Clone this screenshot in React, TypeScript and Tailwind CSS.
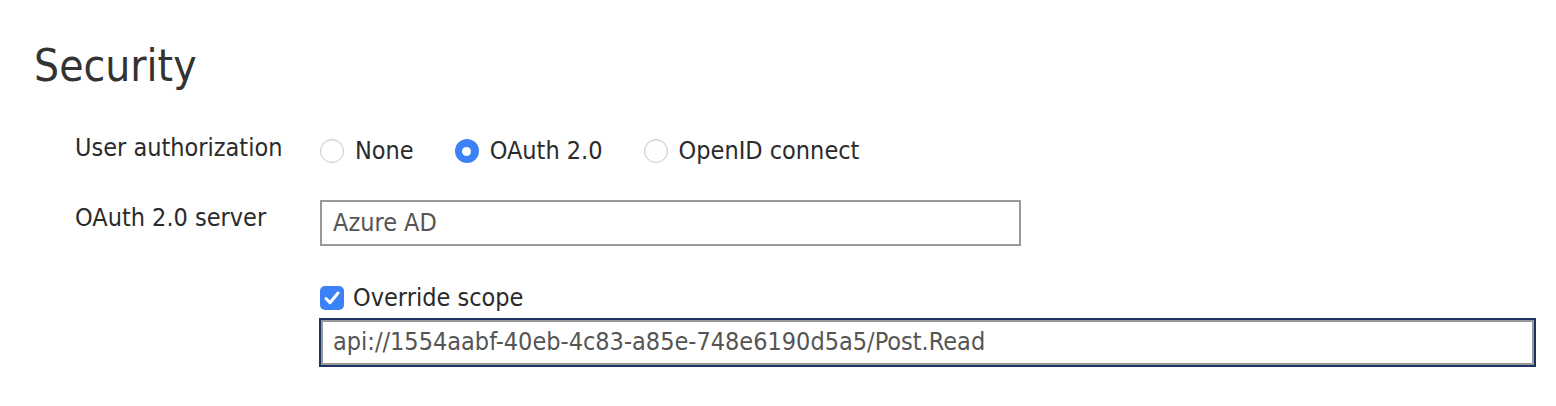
import React, { useState } from "react";

const font = { fontFamily: '"DejaVu Sans Condensed", "DejaVu Sans", Verdana, sans-serif' };

function Radio({ checked, label, onSelect }: { checked: boolean; label: string; onSelect: () => void }) {
  return (
    <label className="flex items-center cursor-pointer" onClick={onSelect}>
      {checked ? (
        <span className="w-[24px] h-[24px] rounded-full bg-[#3b82f6] flex items-center justify-center">
          <span className="w-[9px] h-[9px] rounded-full bg-white" />
        </span>
      ) : (
        <span className="w-[24px] h-[24px] rounded-full border border-[#c8c8c8] bg-white shadow-[inset_0_1px_1px_rgba(0,0,0,0.06)]" />
      )}
      <span className="ml-[11px]">{label}</span>
    </label>
  );
}

export default function App() {
  const [auth, setAuth] = useState("oauth");
  const [override, setOverride] = useState(true);

  return (
    <div className="w-[1556px] h-[406px] bg-white text-[#2b2b2b] text-[25px]" style={font}>
      <h1 className="pl-[34px] pt-[38px] text-[44px] leading-[56px] text-[#333]">Security</h1>

      <div className="pl-[75px] pt-[29px]">
        <div className="flex items-center h-[56px]">
          <div className="w-[245px] -mt-[6px]">User authorization</div>
          <div className="flex items-center gap-[41px]">
            <Radio checked={auth === "none"} label="None" onSelect={() => setAuth("none")} />
            <Radio checked={auth === "oauth"} label="OAuth 2.0" onSelect={() => setAuth("oauth")} />
            <Radio checked={auth === "oidc"} label="OpenID connect" onSelect={() => setAuth("oidc")} />
          </div>
        </div>

        <div className="flex items-start mt-[21px]">
          <div className="w-[245px] -mt-[1px]">OAuth 2.0 server</div>
          <div className="flex flex-col">
            <div className="w-[701px] h-[46px] border-2 border-[#999] flex items-center px-[11px] text-[#555]">
              Azure AD
            </div>
            <label className="flex items-center mt-[33px] cursor-pointer" onClick={() => setOverride(!override)}>
              <span
                className={`w-[24px] h-[24px] rounded-[5px] flex items-center justify-center ${
                  override ? "bg-[#3b82f6]" : "border border-[#c8c8c8] bg-white"
                }`}
              >
                {override && (
                  <svg width="20" height="20" viewBox="0 0 20 20" fill="none">
                    <path d="M4 10.5l4 4.2L16 5" stroke="white" strokeWidth="3" strokeLinecap="round" strokeLinejoin="round" />
                  </svg>
                )}
              </span>
              <span className="ml-[9px]">Override scope</span>
            </label>
            <div className="mt-[1px] -ml-[1px] w-[1217px] h-[49px] border-2 border-[#1b3461] p-0">
              <div className="w-full h-full border-2 border-[#999] flex items-center px-[10px] text-[#555]">
                api://1554aabf-40eb-4c83-a85e-748e6190d5a5/Post.Read
              </div>
            </div>
          </div>
        </div>
      </div>
    </div>
  );
}
